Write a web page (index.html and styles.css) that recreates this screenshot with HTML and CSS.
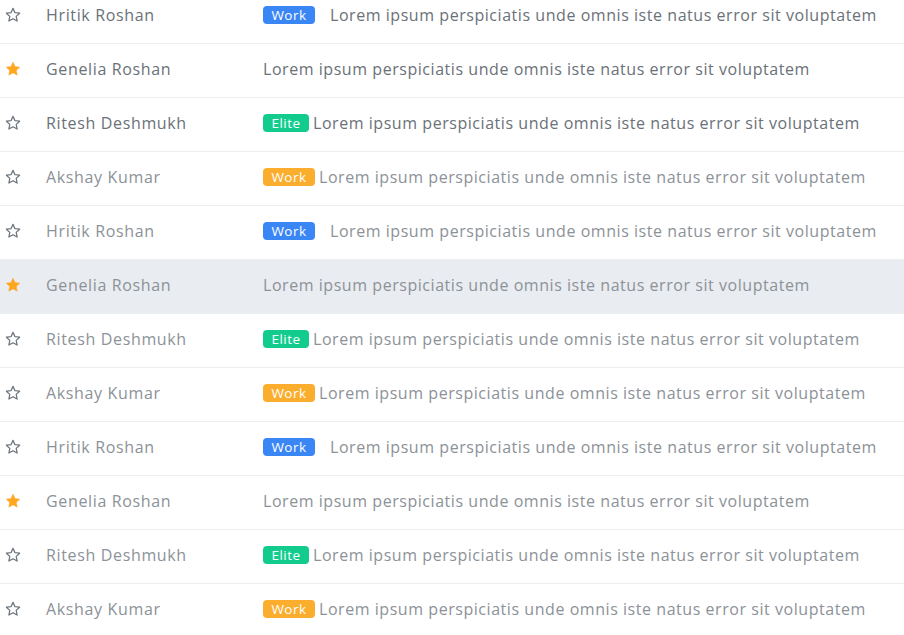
FILE: index.html
```html
<!DOCTYPE html>
<html lang="en">
<head>
<meta charset="utf-8">
<title>Inbox</title>
<link rel="stylesheet" href="styles.css">
</head>
<body>
<svg width="0" height="0" class="defs">
  <defs>
    <path id="star" d="M7 1.2 L8.75 5 L12.8 5.45 L9.8 8.2 L10.6 12.3 L7 10.25 L3.4 12.3 L4.2 8.2 L1.2 5.45 L5.25 5 Z"/>
  </defs>
</svg>
<ul class="mail-list">
  <li class="mail unread">
    <span class="star"><svg viewBox="0 0 14 14"><use href="#star" class="outline"/></svg></span>
    <span class="name">Hritik Roshan</span>
    <span class="subject"><span class="badge blue">Work</span>Lorem ipsum perspiciatis unde omnis iste natus error sit voluptatem</span>
  </li>
  <li class="mail unread">
    <span class="star"><svg viewBox="0 0 14 14"><use href="#star" class="filled"/></svg></span>
    <span class="name">Genelia Roshan</span>
    <span class="subject">Lorem ipsum perspiciatis unde omnis iste natus error sit voluptatem</span>
  </li>
  <li class="mail unread">
    <span class="star"><svg viewBox="0 0 14 14"><use href="#star" class="outline"/></svg></span>
    <span class="name">Ritesh Deshmukh</span>
    <span class="subject"><span class="badge green">Elite</span>Lorem ipsum perspiciatis unde omnis iste natus error sit voluptatem</span>
  </li>
  <li class="mail">
    <span class="star"><svg viewBox="0 0 14 14"><use href="#star" class="outline"/></svg></span>
    <span class="name">Akshay Kumar</span>
    <span class="subject"><span class="badge orange">Work</span>Lorem ipsum perspiciatis unde omnis iste natus error sit voluptatem</span>
  </li>
  <li class="mail">
    <span class="star"><svg viewBox="0 0 14 14"><use href="#star" class="outline"/></svg></span>
    <span class="name">Hritik Roshan</span>
    <span class="subject"><span class="badge blue">Work</span>Lorem ipsum perspiciatis unde omnis iste natus error sit voluptatem</span>
  </li>
  <li class="mail active">
    <span class="star"><svg viewBox="0 0 14 14"><use href="#star" class="filled"/></svg></span>
    <span class="name">Genelia Roshan</span>
    <span class="subject">Lorem ipsum perspiciatis unde omnis iste natus error sit voluptatem</span>
  </li>
  <li class="mail">
    <span class="star"><svg viewBox="0 0 14 14"><use href="#star" class="outline"/></svg></span>
    <span class="name">Ritesh Deshmukh</span>
    <span class="subject"><span class="badge green">Elite</span>Lorem ipsum perspiciatis unde omnis iste natus error sit voluptatem</span>
  </li>
  <li class="mail">
    <span class="star"><svg viewBox="0 0 14 14"><use href="#star" class="outline"/></svg></span>
    <span class="name">Akshay Kumar</span>
    <span class="subject"><span class="badge orange">Work</span>Lorem ipsum perspiciatis unde omnis iste natus error sit voluptatem</span>
  </li>
  <li class="mail">
    <span class="star"><svg viewBox="0 0 14 14"><use href="#star" class="outline"/></svg></span>
    <span class="name">Hritik Roshan</span>
    <span class="subject"><span class="badge blue">Work</span>Lorem ipsum perspiciatis unde omnis iste natus error sit voluptatem</span>
  </li>
  <li class="mail">
    <span class="star"><svg viewBox="0 0 14 14"><use href="#star" class="filled"/></svg></span>
    <span class="name">Genelia Roshan</span>
    <span class="subject">Lorem ipsum perspiciatis unde omnis iste natus error sit voluptatem</span>
  </li>
  <li class="mail">
    <span class="star"><svg viewBox="0 0 14 14"><use href="#star" class="outline"/></svg></span>
    <span class="name">Ritesh Deshmukh</span>
    <span class="subject"><span class="badge green">Elite</span>Lorem ipsum perspiciatis unde omnis iste natus error sit voluptatem</span>
  </li>
  <li class="mail">
    <span class="star"><svg viewBox="0 0 14 14"><use href="#star" class="outline"/></svg></span>
    <span class="name">Akshay Kumar</span>
    <span class="subject"><span class="badge orange">Work</span>Lorem ipsum perspiciatis unde omnis iste natus error sit voluptatem</span>
  </li>
</ul>
</body>
</html>
```
FILE: styles.css
```css
html, body {
  margin: 0;
  padding: 0;
  background: #ffffff;
  overflow: hidden;
}
body {
  font-family: "Open Sans", "Liberation Sans", sans-serif;
  font-size: 16px;
  color: #8c9298;
}
.defs {
  position: absolute;
  width: 0;
  height: 0;
}
.mail-list {
  list-style: none;
  margin: -10px 0 0 0;
  padding: 0;
}
.mail {
  box-sizing: border-box;
  display: grid;
  grid-template-columns: 46px 217px 1fr;
  align-items: center;
  height: 54px;
  padding-bottom: 3px;
  border-bottom: 1px solid #eceff2;
  white-space: nowrap;
}
.mail.unread {
  color: #6a7178;
}
.mail.active {
  background: #e9ecf0;
}
.star {
  display: flex;
  padding-left: 5px;
}
.star svg {
  width: 16px;
  height: 16px;
}
.outline {
  fill: none;
  stroke: #6c757d;
  stroke-width: 1.1;
  stroke-linejoin: round;
}
.filled {
  fill: #ffa61f;
  stroke: #ffa61f;
  stroke-width: 0.6;
  stroke-linejoin: round;
}
.name {
  letter-spacing: 0.65px;
}
.subject {
  display: flex;
  align-items: center;
  letter-spacing: 0.55px;
}
.badge {
  display: inline-flex;
  align-items: center;
  justify-content: center;
  height: 18px;
  border-radius: 4px;
  color: #ffffff;
  font-size: 13.5px;
  letter-spacing: 0.5px;
  margin-right: 4px;
}
.badge.blue {
  background: #3a86f5;
  width: 52px;
  margin-right: 15px;
}
.badge.orange {
  background: #fbad2e;
  width: 52px;
}
.badge.green {
  background: #12cc8e;
  width: 46px;
}
```
